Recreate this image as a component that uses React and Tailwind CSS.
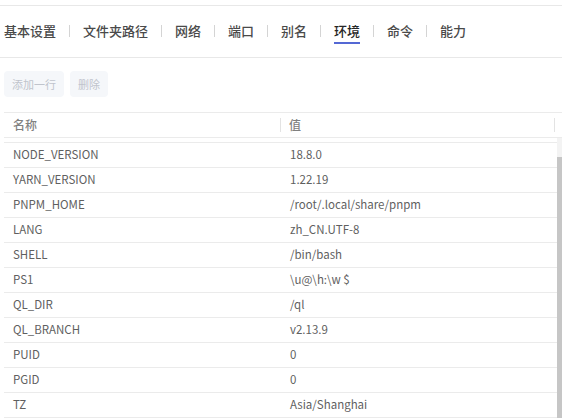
import React from "react";

const tabs = ["基本设置", "文件夹路径", "网络", "端口", "别名", "环境", "命令", "能力"];
const rows = [
  ["NODE_VERSION", "18.8.0"],
  ["YARN_VERSION", "1.22.19"],
  ["PNPM_HOME", "/root/.local/share/pnpm"],
  ["LANG", "zh_CN.UTF-8"],
  ["SHELL", "/bin/bash"],
  ["PS1", "\\u@\\h:\\w $"],
  ["QL_DIR", "/ql"],
  ["QL_BRANCH", "v2.13.9"],
  ["PUID", "0"],
  ["PGID", "0"],
  ["TZ", "Asia/Shanghai"],
];

export default function App() {
  return (
    <div
      className="w-[562px] h-[419px] overflow-hidden bg-white"
      style={{ fontFamily: '"Noto Sans CJK SC", "Noto Sans", sans-serif' }}
    >
      <div className="h-[5px]" />
      <div className="h-[53px] border-y border-[#e8e8e8] flex items-center pl-1 pb-[1px]">
        {tabs.map((t, i) => (
          <React.Fragment key={t}>
            {i > 0 && <span className="mx-[13px] w-px h-[12px] bg-[#d4d4d4]" />}
            <span
              className={
                "relative text-[13px] leading-[20px] font-medium " +
                (t === "环境" ? "text-[#262626]" : "text-[#4a4a4a]")
              }
            >
              {t}
              {t === "环境" && (
                <span className="absolute left-0 right-0 top-[21px] h-[2px] bg-[#5468d4]" />
              )}
            </span>
          </React.Fragment>
        ))}
      </div>
      <div className="mt-[13px] pl-1 flex gap-1.5">
        <div className="h-[26px] px-2 rounded bg-[#f5f7fa] text-[#c0c4cc] text-[11px] flex items-center">
          添加一行
        </div>
        <div className="h-[26px] px-2 rounded bg-[#f5f7fa] text-[#c0c4cc] text-[11px] flex items-center">
          删除
        </div>
      </div>
      <div className="mt-[15px] ml-1">
        <div className="h-[26px] border-y border-[#ebebeb] flex items-center text-[12px] font-medium text-[#808080]">
          <div className="w-[277px] pl-[9px] flex items-center justify-between">
            <span>名称</span>
            <span className="w-px h-[14px] bg-[#e3e3e3]" />
          </div>
          <div className="w-[274px] pl-[8px] flex items-center justify-between">
            <span>值</span>
            <span className="w-px h-[14px] bg-[#e3e3e3]" />
          </div>
        </div>
        <div className="flex">
          <div className="w-[553px]">
            <div className="h-[5px] border-b border-[#ebebeb]" />
            {rows.map(([k, v]) => (
              <div
                key={k}
                className="h-[25px] border-b border-[#ebebeb] flex items-center text-[11.5px] text-[#5f5f5f]"
              >
                <div className="w-[277px] pl-[9px]">{k}</div>
                <div className="pl-[9px]">{v}</div>
              </div>
            ))}
          </div>
          <div className="w-[5px] bg-[#f3f3f3] flex flex-col">
            <div className="h-[19px]" />
            <div className="flex-1 bg-[#c6c6c6]" />
          </div>
        </div>
      </div>
    </div>
  );
}
